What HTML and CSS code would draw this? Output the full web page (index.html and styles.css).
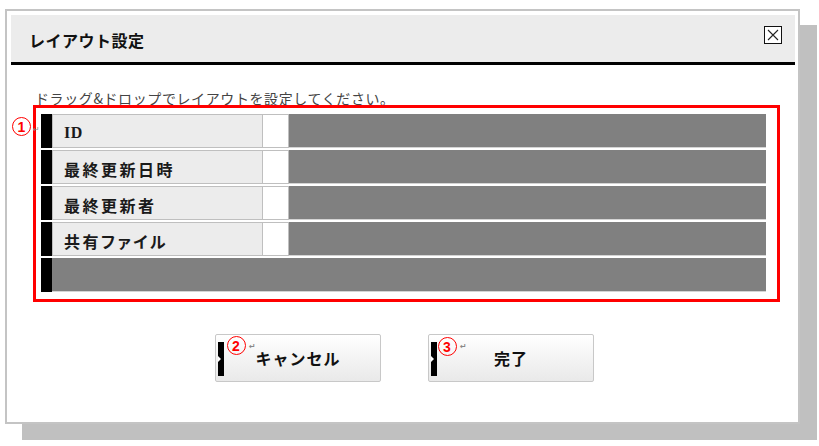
FILE: index.html
```html
<!DOCTYPE html>
<html lang="ja">
<head>
    <meta charset="UTF-8">
    <meta name="viewport" content="width=device-width, initial-scale=1.0">
    <title>レイアウト設定</title>
    <link rel="stylesheet" href="styles.css">
</head>
<body>
    <div class="page">
        <!-- ダイアログ -->
        <div class="dialog">
            <div class="dialog-header">
                <h1 class="dialog-title">レイアウト設定</h1>
                <button class="close-btn" type="button" aria-label="閉じる">
                    <svg width="18" height="18" viewBox="0 0 18 18">
                        <rect x="0.5" y="0.5" width="17" height="17" fill="#fff" stroke="#111" stroke-width="1"/>
                        <path d="M4 4 L14 14 M14 4 L4 14" stroke="#222" stroke-width="1.1" fill="none"/>
                    </svg>
                </button>
            </div>

            <p class="hint">ドラッグ&amp;ドロップでレイアウトを設定してください。</p>

            <!-- レイアウト項目 -->
            <div class="layout-area">
                <span class="mark">1</span>
                <span class="ret ret-area">&#8629;</span>
                <ul class="field-list">
                    <li class="field">
                        <span class="grip"></span>
                        <span class="field-name field-id">ID</span>
                        <span class="field-slot"></span>
                        <span class="field-fill"></span>
                    </li>
                    <li class="field">
                        <span class="grip"></span>
                        <span class="field-name">最終更新日時</span>
                        <span class="field-slot"></span>
                        <span class="field-fill"></span>
                    </li>
                    <li class="field">
                        <span class="grip"></span>
                        <span class="field-name">最終更新者</span>
                        <span class="field-slot"></span>
                        <span class="field-fill"></span>
                    </li>
                    <li class="field">
                        <span class="grip"></span>
                        <span class="field-name">共有ファイル</span>
                        <span class="field-slot"></span>
                        <span class="field-fill"></span>
                    </li>
                    <li class="field">
                        <span class="grip"></span>
                        <span class="field-fill"></span>
                    </li>
                </ul>
            </div>

            <!-- ボタン -->
            <div class="actions">
                <button class="action-btn" type="button">
                    <span class="btn-grip"></span>
                    <span class="mark btn-mark">2</span>
                    <span class="ret btn-ret">&#8629;</span>
                    キャンセル
                </button>
                <button class="action-btn" type="button">
                    <span class="btn-grip"></span>
                    <span class="mark btn-mark btn-mark-3">3</span>
                    <span class="ret btn-ret btn-ret-3">&#8629;</span>
                    完了
                </button>
            </div>
        </div>
    </div>
</body>
</html>
```

FILE: styles.css
```css
body {
    margin: 0;
    background-color: #fff;
    font-family: "Noto Sans CJK JP", "Noto Sans", sans-serif;
    color: #111;
}
.page {
    padding: 9px 0 22px 5px;
}
.dialog {
    box-sizing: border-box;
    width: 795px;
    height: 415px;
    border: 2px solid #c4c4c4;
    padding: 4px 3px 4px 4px;
    background-color: #fff;
    box-shadow: 17px 16px 0 #c0c0c0;
}
.dialog-header {
    display: flex;
    align-items: center;
    height: 47px;
    background-color: #ececec;
    border-bottom: 3px solid #000;
}
.dialog-title {
    flex: 1;
    margin: 0;
    padding: 2px 0 0 18px;
    font-size: 16px;
    font-weight: bold;
    letter-spacing: 0.5px;
    color: #111;
}
.close-btn {
    align-self: flex-start;
    margin: 11px 13px 0 0;
    padding: 0;
    border: none;
    background: none;
    width: 18px;
    height: 18px;
    line-height: 0;
}
.hint {
    box-sizing: border-box;
    height: 40px;
    margin: 0;
    padding: 25px 0 0 24px;
    font-size: 14px;
    line-height: 16px;
    letter-spacing: 0.6px;
    color: #444;
}

/* 項目リスト */
.layout-area {
    position: relative;
    display: flex;
    align-items: flex-start;
}
.mark {
    box-sizing: border-box;
    display: flex;
    align-items: center;
    justify-content: center;
    width: 19px;
    height: 19px;
    margin: 12px 2px 0 1px;
    border: 1.5px solid #f00;
    border-radius: 50%;
    color: #f00;
    font-family: "Liberation Sans", Arial, sans-serif;
    font-size: 14px;
    font-weight: bold;
    line-height: 1;
}
.ret {
    position: absolute;
    font-family: "DejaVu Sans", sans-serif;
    font-size: 8px;
    line-height: 1;
    color: #888;
}
.ret-area {
    left: 22px;
    top: 21px;
}
.field-list {
    box-sizing: border-box;
    width: 747px;
    list-style: none;
    margin: 0;
    padding: 6px 11px 7px 5px;
    border: 3px solid #f00;
    display: flex;
    flex-direction: column;
    gap: 2px;
}
.field {
    display: flex;
    height: 34px;
}
.grip {
    width: 11px;
    background-color: #000;
}
.field-name {
    box-sizing: border-box;
    display: flex;
    align-items: center;
    width: 211px;
    padding: 3px 0 0 11px;
    background-color: #ececec;
    border: 1px solid #bfbfbf;
    font-size: 16px;
    font-weight: bold;
    letter-spacing: 2.5px;
    font-feature-settings: "palt";
    color: #1a1a1a;
}
.field-id {
    font-family: "Liberation Serif", "Times New Roman", serif;
    font-size: 16px;
    letter-spacing: 0.5px;
}
.field-slot {
    box-sizing: border-box;
    width: 26px;
    background-color: #fff;
    border: 1px solid #bfbfbf;
    border-left: none;
}
.field-fill {
    flex: 1;
    background-color: #808080;
    border-bottom: 1px solid #d4d4d4;
}

/* ボタン */
.actions {
    display: flex;
    justify-content: center;
    gap: 47px;
    margin: 32px 0 0 3px;
}
.action-btn {
    position: relative;
    width: 166px;
    height: 48px;
    padding: 0;
    border: 1px solid #c8c8c8;
    border-radius: 2px;
    background: linear-gradient(#fff, #e9e9e9);
    font-family: "Noto Sans CJK JP", sans-serif;
    font-size: 16px;
    font-weight: bold;
    letter-spacing: 1px;
    color: #111;
}
.btn-grip {
    position: absolute;
    left: 2px;
    top: 7px;
    width: 6px;
    height: 34px;
    background-color: #000;
}
.btn-grip::after {
    content: "";
    position: absolute;
    left: 0;
    top: 14px;
    border-left: 3px solid #fff;
    border-top: 3px solid transparent;
    border-bottom: 3px solid transparent;
}
.btn-mark {
    position: absolute;
    left: 11px;
    top: 1px;
    margin: 0;
}
.btn-mark-3 {
    left: 9px;
    top: 2px;
}
.btn-ret {
    left: 33px;
    top: 8px;
}
.btn-ret-3 {
    left: 31px;
}
```
